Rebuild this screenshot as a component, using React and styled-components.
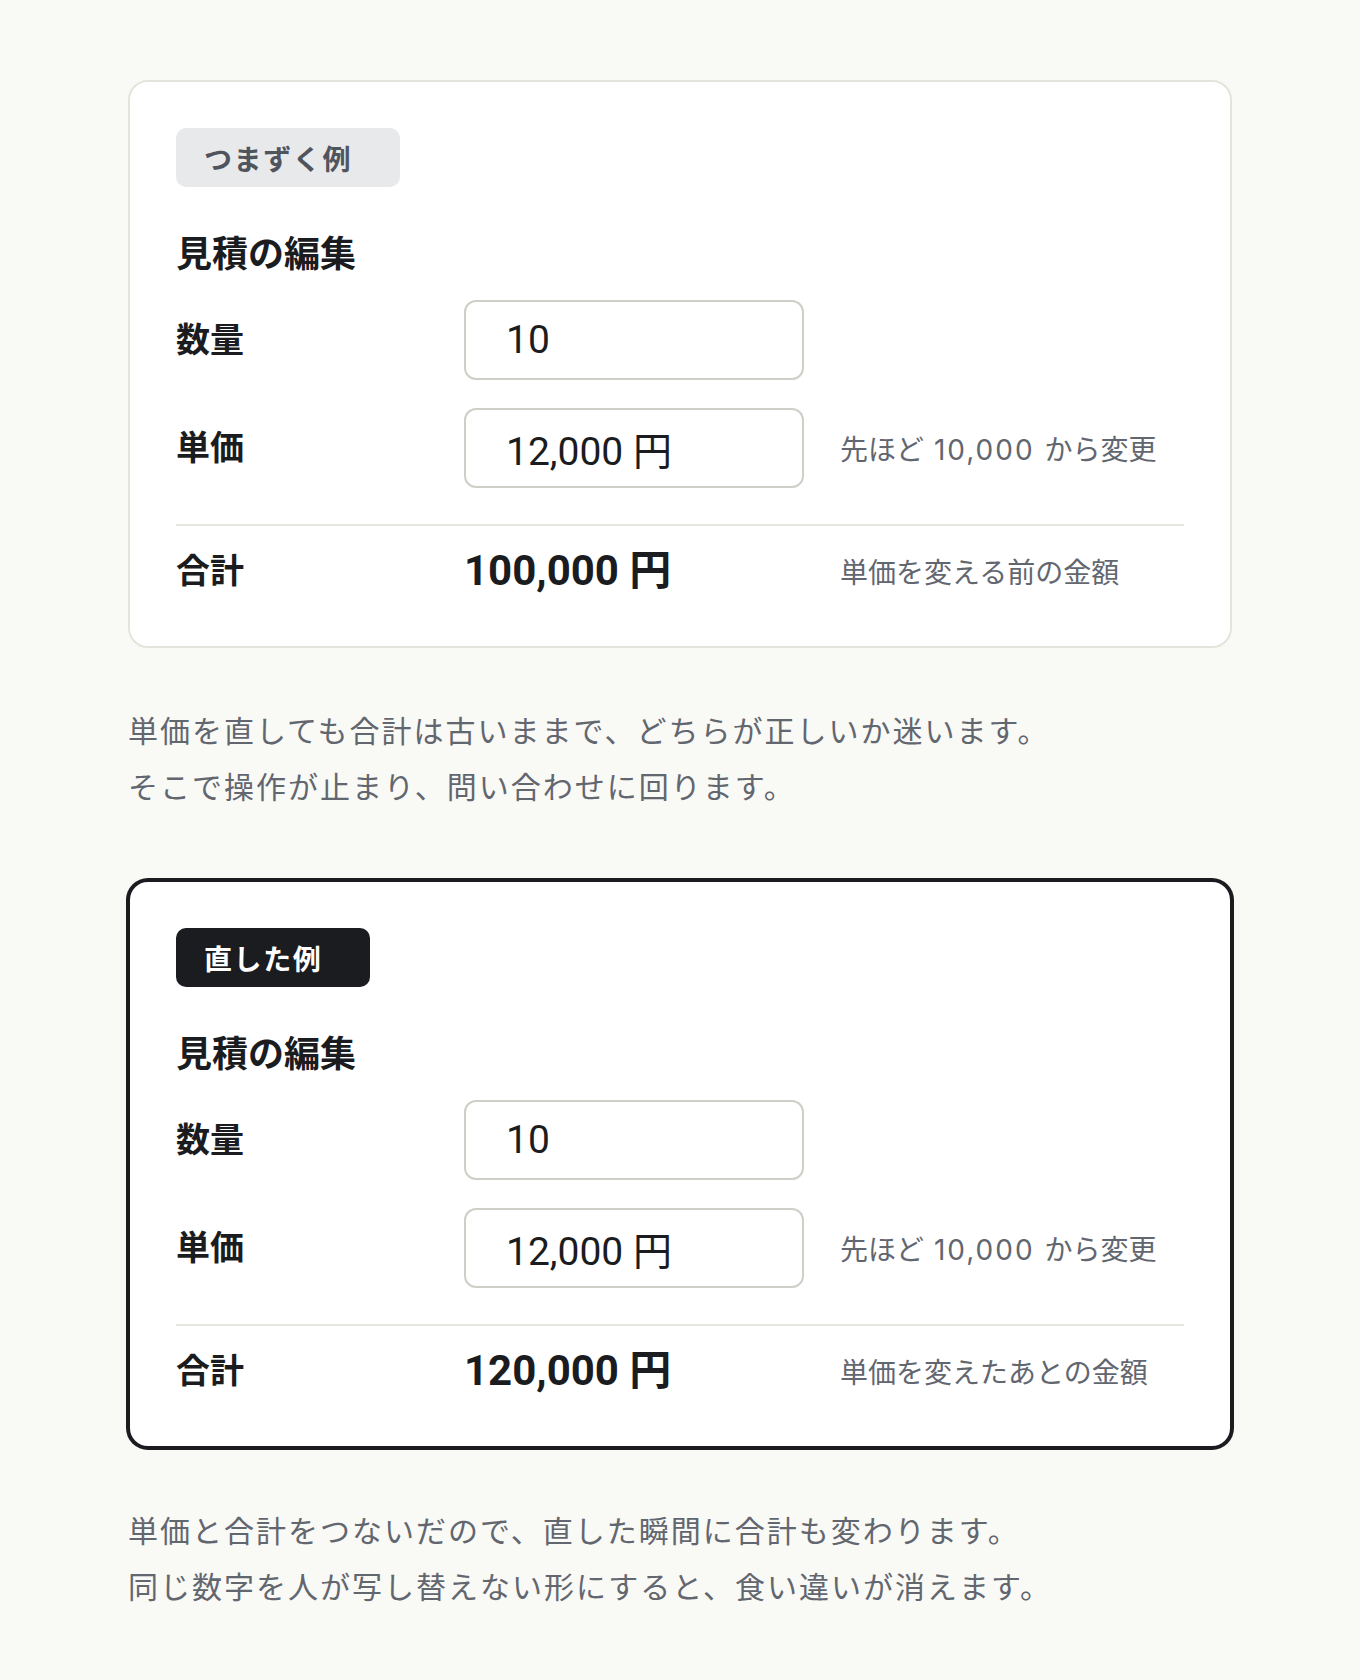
import React from "react";
import styled, { createGlobalStyle, css } from "styled-components";

const GlobalStyle = createGlobalStyle`
  html, body {
    margin: 0;
    padding: 0;
    background: #f9f9f5;
  }
  body {
    font-family: "Roboto", "Noto Sans CJK JP", sans-serif;
    color: #1b1c20;
    -webkit-font-smoothing: antialiased;
  }
  * { box-sizing: border-box; }
`;

const Page = styled.main`
  padding: 80px 0 80px;
`;

const Column = styled.div`
  max-width: 1104px;
  margin: 0 auto;
  display: flex;
  flex-direction: column;
  gap: 64px;
`;

const Section = styled.section`
  display: flex;
  flex-direction: column;
  gap: 56px;
`;

const Card = styled.div`
  background: #ffffff;
  border: 2px solid #e4e4dd;
  border-radius: 20px;
  padding: 46px;
  display: flex;
  flex-direction: column;
  align-items: stretch;

  ${(p) =>
    p.$strong &&
    css`
      border-color: #1b1c20;
      box-shadow: 0 0 0 2px #1b1c20;
    `}
`;

const Badge = styled.span`
  align-self: flex-start;
  display: inline-flex;
  align-items: center;
  height: 59px;
  padding: 0 48px 0 28px;
  border-radius: 10px;
  font-size: 28px;
  font-weight: 700;
  letter-spacing: 1.6px;
  background: ${(p) => (p.$dark ? "#1b1c20" : "#e8e9eb")};
  color: ${(p) => (p.$dark ? "#ffffff" : "#50545d")};
`;

const Title = styled.h2`
  margin: 44px 0 21px;
  font-size: 36px;
  line-height: 48px;
  font-weight: 700;
  color: #1b1c20;
`;

const Fields = styled.div`
  display: flex;
  flex-direction: column;
  gap: 28px;
`;

const Row = styled.div`
  display: grid;
  grid-template-columns: 252px 340px 1fr;
  column-gap: 36px;
  align-items: center;
`;

const TotalRow = styled(Row)`
  margin-top: 36px;
  padding-top: 16px;
  border-top: 2px solid #e6e6df;
`;

const Label = styled.span`
  font-size: 34px;
  font-weight: 700;
  line-height: 58px;
  color: #1b1c20;
`;

const Field = styled.input`
  width: 100%;
  height: 80px;
  padding: 0 40px;
  border: 2px solid #cfcfc7;
  border-radius: 12px;
  background: #ffffff;
  font-family: inherit;
  font-size: 39px;
  color: #1b1c20;
  outline: none;
`;

const Amount = styled.span`
  font-size: 42px;
  font-weight: 700;
  line-height: 58px;
  color: #1b1c20;
`;

const Hint = styled.span`
  font-family: "Inter", "Noto Sans CJK JP", sans-serif;
  font-size: 28px;
  color: #62666f;
  white-space: nowrap;
`;

/* previous value inside a hint, set a little looser than the kana around it */
const HintNum = styled.span`
  letter-spacing: 2px;
  margin: 0 2px;
`;

const Note = styled.p`
  margin: 0;
  font-size: 30px;
  line-height: 56px;
  letter-spacing: 2px;
  color: #62666f;
`;

function Estimate({ badge, dark, total, totalHint, note }) {
  return (
    <Section>
      <Card $strong={dark}>
        <Badge $dark={dark}>{badge}</Badge>
        <Title>見積の編集</Title>
        <Fields>
          <Row>
            <Label>数量</Label>
            <Field type="text" defaultValue="10" readOnly />
          </Row>
          <Row>
            <Label>単価</Label>
            <Field type="text" defaultValue="12,000 円" readOnly />
            <Hint>
              先ほど <HintNum>10,000</HintNum> から変更
            </Hint>
          </Row>
        </Fields>
        <TotalRow>
          <Label>合計</Label>
          <Amount>{total}</Amount>
          <Hint>{totalHint}</Hint>
        </TotalRow>
      </Card>
      <Note>
        {note.map((line) => (
          <React.Fragment key={line}>
            {line}
            <br />
          </React.Fragment>
        ))}
      </Note>
    </Section>
  );
}

export default function App() {
  return (
    <>
      <GlobalStyle />
      <Page>
        <Column>
          <Estimate
            badge="つまずく例"
            total="100,000 円"
            totalHint="単価を変える前の金額"
            note={[
              "単価を直しても合計は古いままで、どちらが正しいか迷います。",
              "そこで操作が止まり、問い合わせに回ります。",
            ]}
          />
          <Estimate
            dark
            badge="直した例"
            total="120,000 円"
            totalHint="単価を変えたあとの金額"
            note={[
              "単価と合計をつないだので、直した瞬間に合計も変わります。",
              "同じ数字を人が写し替えない形にすると、食い違いが消えます。",
            ]}
          />
        </Column>
      </Page>
    </>
  );
}
